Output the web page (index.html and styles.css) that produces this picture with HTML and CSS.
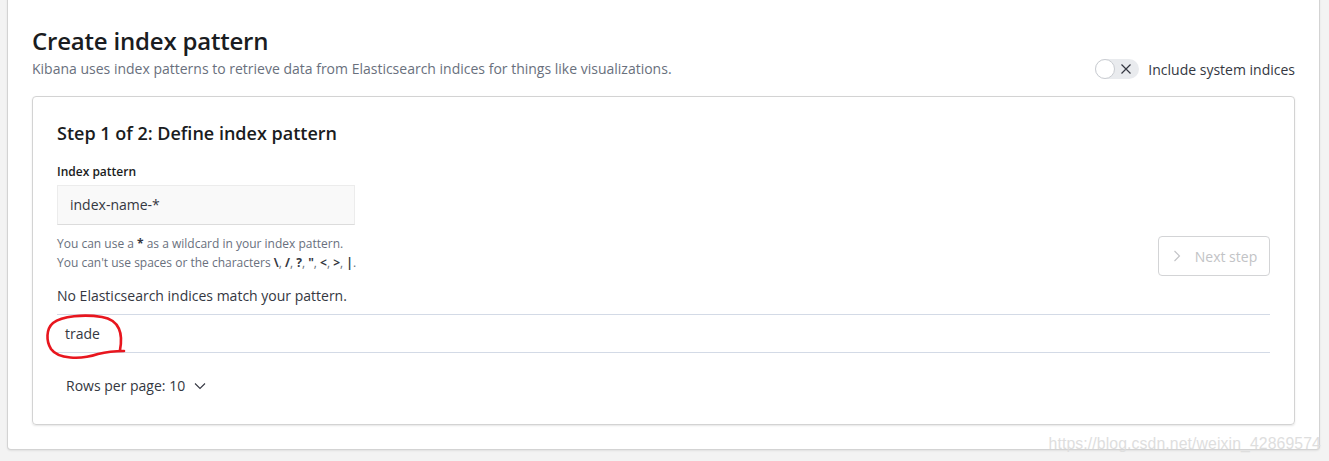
FILE: index.html
```html
<!DOCTYPE html>
<html>
<head>
<meta charset="utf-8">
<link rel="stylesheet" href="styles.css">
</head>
<body>
<div class="page">
  <div class="panel">
    <div class="header">
      <div class="header-text">
        <h1 class="title">Create index pattern</h1>
        <p class="subtitle">Kibana uses index patterns to retrieve data from Elasticsearch indices for things like visualizations.</p>
      </div>
      <div class="switch-row">
        <span class="switch">
          <span class="knob"></span>
          <svg class="switch-x" width="12" height="12" viewBox="0 0 12 12"><path d="M1.5 1.5 L10.5 10.5 M10.5 1.5 L1.5 10.5" stroke="#343741" stroke-width="1.2" fill="none"/></svg>
        </span>
        <span class="switch-label">Include system indices</span>
      </div>
    </div>

    <div class="card">
      <h2 class="step-title">Step 1 of 2: Define index pattern</h2>
      <div class="form-row">
        <div class="form-left">
          <label class="form-label">Index pattern</label>
          <div class="input">index-name-*</div>
          <div class="help">
            <div>You can use a <b>*</b> as a wildcard in your index pattern.</div>
            <div>You can't use spaces or the characters <b>\</b>, <b>/</b>, <b>?</b>, <b>"</b>, <b>&lt;</b>, <b>&gt;</b>, <b>|</b>.</div>
          </div>
        </div>
        <button class="next-btn">
          <svg width="12" height="16" viewBox="0 0 12 16"><path d="M3.5 3 L8.5 8 L3.5 13" stroke="#c2c3c6" stroke-width="1.1" fill="none"/></svg>
          <span>Next step</span>
        </button>
      </div>
      <p class="status">No Elasticsearch indices match your pattern.</p>
      <div class="table">
        <div class="row"><span class="cell">trade</span></div>
        <svg class="mark" width="92" height="56" viewBox="0 0 92 56"><path d="M80 40 C 83 24, 80 10, 62 7 C 44 4, 22 6, 13 13 C 6 19, 6 31, 11 39 C 18 49, 40 50, 58 44 C 66 42, 75 41, 84 41" stroke="#e8161e" stroke-width="2.6" fill="none" stroke-linecap="round" stroke-linejoin="round"/></svg>
      </div>
      <div class="pager">
        <span>Rows per page: 10</span>
        <svg width="14" height="14" viewBox="0 0 14 14"><path d="M2 4.5 L7 9.5 L12 4.5" stroke="#343741" stroke-width="1.1" fill="none"/></svg>
      </div>
    </div>
  </div>
  <div class="watermark">https://blog.csdn.net/weixin_42869574</div>
</div>
</body>
</html>
```

FILE: styles.css
```css
html, body {
  margin: 0;
  padding: 0;
  background: #f3f3f3;
  font-family: "Open Sans", "Noto Sans", sans-serif;
  color: #343741;
}

.page {
  position: relative;
  width: 1329px;
  height: 461px;
  overflow: hidden;
}

.panel {
  margin: -10px 9px 0 7px;
  height: 460px;
  box-sizing: border-box;
  background: #fff;
  border: 1px solid #d3d3d3;
  border-top: none;
  border-radius: 0 0 4px 4px;
  box-shadow: 0 1px 2px rgba(0,0,0,0.08);
  padding: 36px 24px 0 24px;
}

.header {
  display: flex;
  justify-content: space-between;
  align-items: flex-end;
}

.title {
  margin: 0;
  font-size: 24px;
  line-height: 30px;
  font-weight: 600;
  color: #1a1c21;
  letter-spacing: -0.2px;
}

.subtitle {
  margin: 3px 0 0;
  font-size: 14px;
  line-height: 20px;
  color: #69707d;
}

.switch-row {
  display: flex;
  align-items: center;
  gap: 9px;
  margin-bottom: 0;
}

.switch {
  position: relative;
  width: 44px;
  height: 20px;
  border-radius: 10px;
  background: #e9ebee;
  display: inline-block;
}

.knob {
  position: absolute;
  left: 0;
  top: 0;
  width: 18px;
  height: 18px;
  border-radius: 50%;
  background: #fff;
  border: 1px solid #c9ccd1;
}

.switch-x {
  position: absolute;
  right: 7px;
  top: 4px;
}

.switch-label {
  font-size: 14px;
  color: #343741;
}

.card {
  position: relative;
  margin-top: 17px;
  height: 329px;
  box-sizing: border-box;
  border: 1px solid #d3d3d3;
  border-radius: 4px;
  box-shadow: 0 1px 2px rgba(0,0,0,0.1);
  padding: 24px 24px 0 24px;
}

.step-title {
  margin: 0;
  font-size: 18px;
  line-height: 24px;
  font-weight: 600;
  color: #1a1c21;
}

.form-row {
  display: flex;
  justify-content: space-between;
  align-items: flex-end;
  margin-top: 18px;
}

.form-label {
  display: block;
  font-size: 12px;
  line-height: 18px;
  font-weight: 600;
  color: #1a1c21;
  margin-bottom: 4px;
}

.input {
  width: 298px;
  height: 40px;
  box-sizing: border-box;
  background: #f9f9f9;
  border: 1px solid #ececec;
  border-bottom-color: #dcdcdc;
  padding: 0 12px;
  font-size: 14px;
  line-height: 38px;
  color: #343741;
}

.help {
  margin-top: 9px;
  font-size: 12px;
  line-height: 19px;
  color: #69707d;
}

.help b {
  color: #343741;
  font-weight: 700;
}

.next-btn {
  width: 112px;
  height: 40px;
  margin-bottom: -4px;
  display: flex;
  align-items: center;
  justify-content: center;
  gap: 12px;
  background: #fff;
  border: 1px solid #d3d4d6;
  border-radius: 4px;
  font-family: inherit;
  font-size: 14px;
  color: #c2c3c6;
  padding: 0;
}

.status {
  margin: 14px 0 0;
  font-size: 14px;
  line-height: 20px;
  color: #343741;
}

.table {
  position: relative;
  margin-top: 8px;
  border-top: 1px solid #d3dae6;
  border-bottom: 1px solid #d3dae6;
}

.row {
  height: 37px;
  display: flex;
  align-items: center;
  padding-left: 8px;
  font-size: 14px;
}

.mark {
  position: absolute;
  left: -17px;
  top: -5px;
}

.pager {
  display: flex;
  align-items: center;
  gap: 8px;
  margin-top: 23px;
  padding-left: 9px;
  font-size: 14px;
  line-height: 20px;
}

.watermark {
  position: absolute;
  right: 8px;
  top: 435px;
  font-family: "Liberation Sans", Arial, sans-serif;
  font-size: 15.8px;
  color: #dedede;
  letter-spacing: 0.1px;
}
```
